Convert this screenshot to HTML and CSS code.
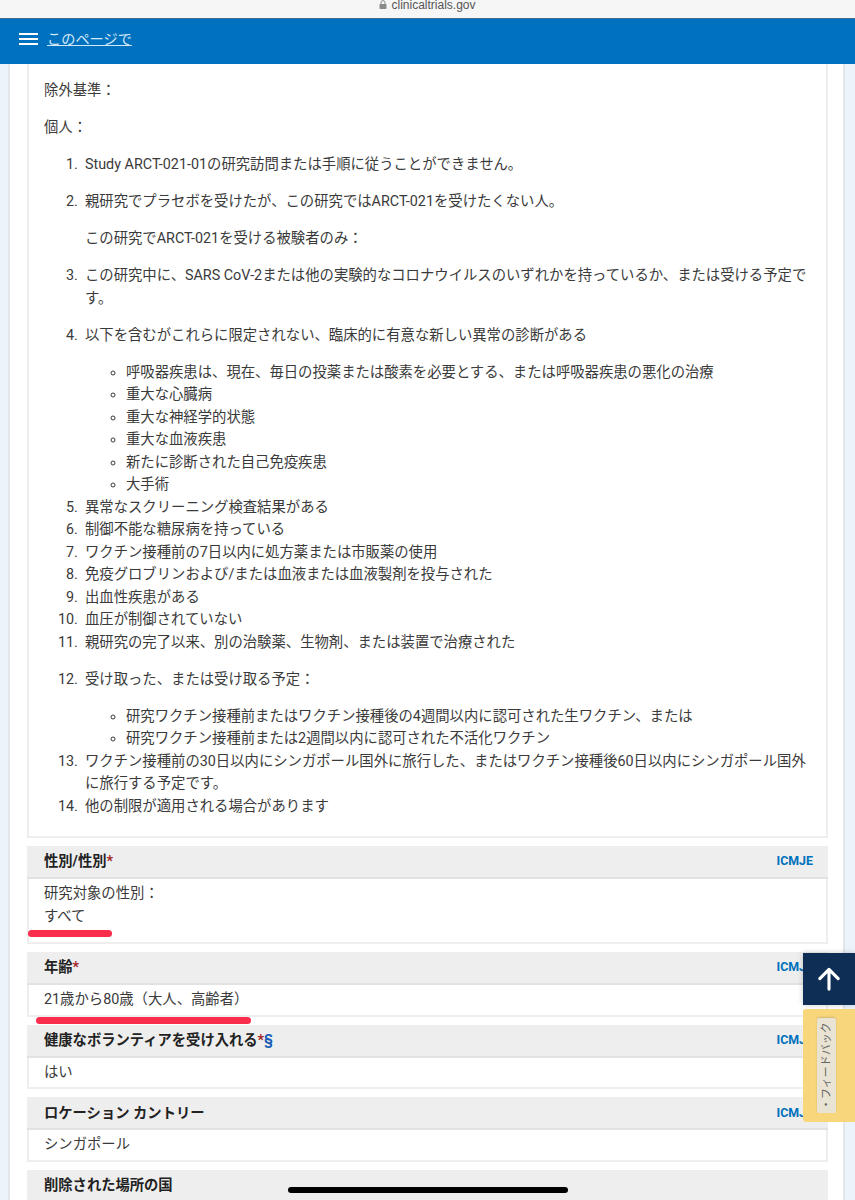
FILE: index.html
```html
<!DOCTYPE html>
<html lang="ja">
<head>
    <title>clinicaltrials.gov</title>
    <link rel="stylesheet" href="styles.css">
</head>
<body>
    <div class="browser-bar">
        <svg class="lock" width="8" height="9" viewBox="0 0 8 9"><path d="M2 4V2.6a2 2 0 0 1 4 0V4" fill="none" stroke="#8a8a8a" stroke-width="1"/><rect x="0.5" y="4" width="7" height="5" rx="0.8" fill="#8a8a8a"/></svg>
        <span>clinicaltrials.gov</span>
    </div>
    <header class="top-bar">
        <svg class="menu-icon" width="19" height="12" viewBox="0 0 19 12"><path d="M0 1h19M0 6h19M0 11h19" stroke="#fff" stroke-width="2"/></svg>
        <a href="#" class="top-link">このページで</a>
    </header>

    <div class="page">
        <div class="content">
            <section class="criteria">
                <p>除外基準：</p>
                <p>個人：</p>
                <ol>
                    <li class="spaced">Study ARCT-021-01の研究訪問または手順に従うことができません。</li>
                    <li class="spaced">親研究でプラセボを受けたが、この研究ではARCT-021を受けたくない人。
                        <p class="note">この研究でARCT-021を受ける被験者のみ：</p>
                    </li>
                    <li class="spaced">この研究中に、SARS CoV-2または他の実験的なコロナウイルスのいずれかを持っているか、または受ける予定です。</li>
                    <li>以下を含むがこれらに限定されない、臨床的に有意な新しい異常の診断がある
                        <ul>
                            <li>呼吸器疾患は、現在、毎日の投薬または酸素を必要とする、または呼吸器疾患の悪化の治療</li>
                            <li>重大な心臓病</li>
                            <li>重大な神経学的状態</li>
                            <li>重大な血液疾患</li>
                            <li>新たに診断された自己免疫疾患</li>
                            <li>大手術</li>
                        </ul>
                    </li>
                    <li>異常なスクリーニング検査結果がある</li>
                    <li>制御不能な糖尿病を持っている</li>
                    <li>ワクチン接種前の7日以内に処方薬または市販薬の使用</li>
                    <li>免疫グロブリンおよび/または血液または血液製剤を投与された</li>
                    <li>出血性疾患がある</li>
                    <li>血圧が制御されていない</li>
                    <li class="spaced">親研究の完了以来、別の治験薬、生物剤、または装置で治療された</li>
                    <li>受け取った、または受け取る予定：
                        <ul>
                            <li>研究ワクチン接種前またはワクチン接種後の4週間以内に認可された生ワクチン、または</li>
                            <li>研究ワクチン接種前または2週間以内に認可された不活化ワクチン</li>
                        </ul>
                    </li>
                    <li>ワクチン接種前の30日以内にシンガポール国外に旅行した、またはワクチン接種後60日以内にシンガポール国外に旅行する予定です。</li>
                    <li>他の制限が適用される場合があります</li>
                </ol>
            </section>

            <section class="field">
                <div class="field-head"><span>性別/性別<em>*</em></span><a href="#" class="tag">ICMJE</a></div>
                <div class="field-body field-body-tall"><div>研究対象の性別：</div><div>すべて</div></div>
            </section>
            <section class="field">
                <div class="field-head"><span>年齢<em>*</em></span><a href="#" class="tag">ICMJE</a></div>
                <div class="field-body">21歳から80歳（大人、高齢者）</div>
            </section>
            <section class="field">
                <div class="field-head"><span>健康なボランティアを受け入れる<em>*</em><a href="#" class="sect">§</a></span><a href="#" class="tag">ICMJE</a></div>
                <div class="field-body">はい</div>
            </section>
            <section class="field">
                <div class="field-head"><span>ロケーション カントリー</span><a href="#" class="tag">ICMJE</a></div>
                <div class="field-body">シンガポール</div>
            </section>
            <section class="field">
                <div class="field-head"><span>削除された場所の国</span></div>
            </section>
        </div>
    </div>

    <!-- hand drawn marks on top of the screenshot -->
    <div class="marker marker-sex"></div>
    <div class="marker marker-age"></div>

    <a href="#" class="to-top">
        <svg width="22" height="24" viewBox="0 0 24 26"><path d="M12 24V3M2 12.500L12 2.500l10 10" fill="none" stroke="#fff" stroke-width="3.400" stroke-linecap="round" stroke-linejoin="round"/></svg>
    </a>
    <div class="feedback"><span class="feedback-label">・フィードバック</span></div>
    <div class="home-bar"></div>
</body>
</html>
```

FILE: styles.css
```css
html, body {
    margin: 0;
    height: 1200px;
    overflow: hidden;
}

body {
    position: relative;
    font-family: Roboto, "Noto Sans CJK JP", sans-serif;
    font-size: 14.350px;
    line-height: 22.500px;
    color: #3a3a3a;
    background: #fff;
}

/* Browser chrome */
.browser-bar {
    height: 18px;
    background: #f6f6f6;
    display: flex;
    justify-content: center;
    align-items: flex-start;
    gap: 4px;
    font-family: "Liberation Sans", sans-serif;
    font-size: 12px;
    line-height: 11px;
    color: #555;
}

.top-bar {
    height: 46px;
    box-sizing: border-box;
    background: #0071bf;
    display: flex;
    align-items: center;
    padding: 0 0 5px 19px;
    gap: 9px;
    border-top: 1px solid #3d6f96;
}

.top-link {
    color: #d5e8f6;
    font-size: 14.200px;
}

/* Page frame */
.page {
    margin-left: 8px;
    margin-right: 10px;
    border-left: 2px solid #e3e6ea;
    border-right: 2px solid #e3e6ea;
    padding: 0 15px 0 17px;
    height: 1136px;
    overflow: hidden;
    box-shadow: -8px 0 0 #ebf3fb, 10px 0 0 #ebf3fb;
}

.content {
    display: flex;
    flex-direction: column;
    gap: 8px;
}

.criteria {
    border: 2px solid #eee;
    border-top: none;
    padding: 16px 15px 18px 15px;
}

.criteria p {
    margin: 0 0 14.500px;
}

.criteria ol {
    margin: 0;
    padding-left: 41px;
}

.criteria ol > li::marker {
    content: counter(list-item) ".\00a0\00a0";
}

.criteria li.spaced {
    margin-bottom: 14.500px;
}

.criteria .note {
    margin: 14.500px 0 0;
}

.criteria ul {
    list-style: circle;
    margin: 14.500px 0 0;
    padding-left: 41px;
}

/* Record fields */
.field-head {
    height: 33px;
    box-sizing: border-box;
    background: #eee;
    border-bottom: 2px solid #e2e2e2;
    display: flex;
    justify-content: space-between;
    align-items: center;
    padding: 0 15px 0 17px;
    font-size: 14.300px;
    font-weight: bold;
    color: #222;
}

.field-head em {
    color: #a31f1f;
    font-style: normal;
}

.sect {
    color: #1a5fb4;
    text-decoration: none;
}

.tag {
    color: #0071bc;
    font-size: 12.400px;
    text-decoration: none;
}

.field-body {
    border: 2px solid #eee;
    border-top: none;
    padding: 4px 15px 3.300px;
}

.field-body-tall {
    padding-bottom: 13.800px;
}

/* Overlays */
.marker {
    position: absolute;
    height: 7px;
    background: #fb2d4d;
    border-radius: 4px;
}

.marker-sex {
    left: 28px;
    top: 930px;
    width: 84px;
}

.marker-age {
    left: 36px;
    top: 1017px;
    width: 215px;
}

.to-top {
    position: absolute;
    left: 803px;
    top: 953px;
    width: 52px;
    height: 52px;
    background: #0f2e55;
    display: flex;
    align-items: center;
    justify-content: center;
    box-shadow: 0 0 6px rgba(0,0,0,0.2);
}

.feedback {
    position: absolute;
    left: 803px;
    top: 1009px;
    width: 52px;
    height: 113px;
    background: #f8d67c;
    border-radius: 3px 0 0 3px;
}

.feedback-label {
    position: absolute;
    left: 14px;
    top: 9px;
    width: 19px;
    height: 95px;
    box-sizing: border-box;
    background: #e9e3d3;
    border-radius: 2px;
    writing-mode: vertical-rl;
    text-orientation: sideways;
    white-space: nowrap;
    transform: rotate(180deg);
    font-size: 11px;
    line-height: 19px;
    padding-top: 3px;
    color: #666;
    box-shadow: 0 1px 2px rgba(0,0,0,0.15);
}

.home-bar {
    position: absolute;
    left: 288px;
    top: 1187px;
    width: 280px;
    height: 6px;
    background: #000;
    border-radius: 3px;
}
```
